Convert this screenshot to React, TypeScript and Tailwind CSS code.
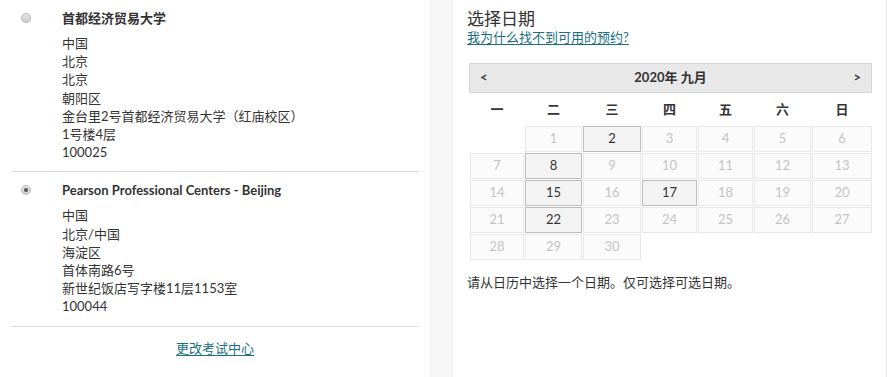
import React from "react";

const font = { fontFamily: '"Lato", "Noto Sans CJK SC", sans-serif' };

function Radio({ checked }: { checked?: boolean }) {
  return (
    <div className="w-[10px] h-[10px] rounded-full border border-[#b8b8b8] bg-gradient-to-b from-[#e4e4e4] to-[#cfcfcf] flex items-center justify-center mt-[4px]">
      {checked && <div className="w-[4px] h-[4px] rounded-full bg-[#555]" />}
    </div>
  );
}

function Center({ title, lines, checked }: { title: string; lines: string[]; checked?: boolean }) {
  return (
    <div className="flex pl-[21px] pt-[9px] pb-[10px]">
      <div className="w-[41px]">
        <Radio checked={checked} />
      </div>
      <div>
        <div className="text-[13px] font-bold leading-[18px] text-[#333]">{title}</div>
        <div className="mt-[7px] text-[13px] leading-[18.2px] text-[#333]">
          {lines.map((l, i) => (
            <div key={i}>{l}</div>
          ))}
        </div>
      </div>
    </div>
  );
}

const avail = new Set([2, 8, 15, 17, 22]);

export default function App() {
  const weekdays = ["一", "二", "三", "四", "五", "六", "日"];
  const cells: (number | null)[] = [null];
  for (let i = 1; i <= 30; i++) cells.push(i);
  return (
    <div className="w-[887px] h-[377px] flex bg-white overflow-hidden" style={font}>
      <div className="w-[430px] shrink-0 bg-white">
        <div className="mx-[11px] border-b border-[#dcdcdc]">
          <div className="-ml-[11px]">
            <Center
              title="首都经济贸易大学"
              lines={["中国", "北京", "北京", "朝阳区", "金台里2号首都经济贸易大学（红庙校区）", "1号楼4层", "100025"]}
            />
          </div>
        </div>
        <div className="mx-[11px] border-b border-[#dcdcdc]">
          <div className="-ml-[11px]">
            <Center
              checked
              title="Pearson Professional Centers - Beijing"
              lines={["中国", "北京/中国", "海淀区", "首体南路6号", "新世纪饭店写字楼11层1153室", "100044"]}
            />
          </div>
        </div>
        <div className="text-center pt-[8px]">
          <span className="text-[13px] text-[#1a6f80] underline underline-offset-2">更改考试中心</span>
        </div>
      </div>
      <div className="w-[23px] shrink-0 bg-[#f7f7f7] border-l border-r border-[#eeeeee]" />
      <div className="flex-1 bg-white border-r border-[#e6e6e6] rounded-bl-[3px] pl-[14px] pt-[9px]">
        <div className="text-[17px] leading-[20px] text-[#333]">选择日期</div>
        <div className="text-[13px] leading-[17px] text-[#1a6f80] underline underline-offset-2">我为什么找不到可用的预约?</div>
        <div className="mt-[17px] ml-[2px] w-[403px]">
          <div className="h-[30px] bg-[#e8e8e8] border border-[#d6d6d6] flex items-center justify-between px-[10px] text-[13px] text-[#333]">
            <span className="font-bold">&lt;</span>
            <span className="font-bold">2020年 九月</span>
            <span className="font-bold">&gt;</span>
          </div>
          <div className="grid grid-cols-[54px_57px_58px_55px_55px_57px_60px] gap-[1px] px-[1px] mt-[6px]">
            {weekdays.map((w) => (
              <div key={w} className="h-[22px] flex items-center justify-center text-[13px] font-bold text-[#333]">
                {w}
              </div>
            ))}
          </div>
          <div className="grid grid-cols-[54px_57px_58px_55px_55px_57px_60px] gap-[1px] px-[1px] mt-[5px]">
            {cells.map((c, i) =>
              c === null ? (
                <div key={i} className="h-[26px]" />
              ) : avail.has(c) ? (
                <div key={i} className="h-[26px] flex items-center justify-center text-[13px] text-[#333] bg-[#f3f3f3] border border-[#bdbdbd]">
                  {c}
                </div>
              ) : (
                <div key={i} className="h-[26px] flex items-center justify-center text-[13px] text-[#c4c4c4] bg-[#fbfbfb] border border-[#e8e8e8]">
                  {c}
                </div>
              )
            )}
          </div>
        </div>
        <div className="mt-[13px] text-[13px] leading-[18px] text-[#333]">请从日历中选择一个日期。仅可选择可选日期。</div>
      </div>
    </div>
  );
}
